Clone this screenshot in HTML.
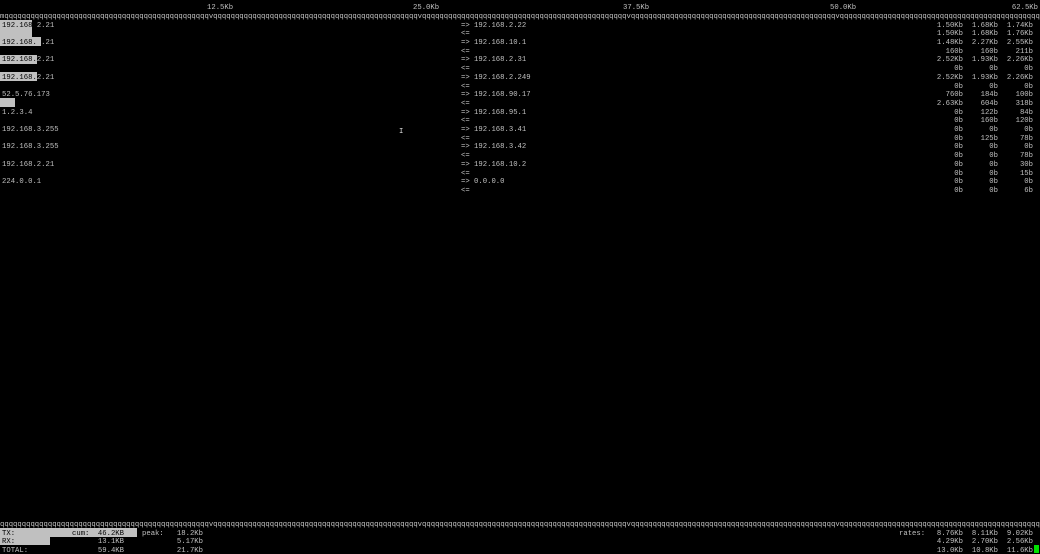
<!DOCTYPE html>
<html><head><meta charset="utf-8"><style>
html,body{margin:0;padding:0;background:#000;width:1040px;height:554px;overflow:hidden}
body{position:relative;font-family:"Liberation Mono",monospace;font-size:7.25px;color:#c0c0c0}
.t{position:absolute;white-space:pre;line-height:8.7px;height:8.7px;margin-top:2px}
.r{text-align:right}
.bar{position:absolute;background:#c0c0c0;left:0}
.inv{color:#000}
</style></head><body>
<div class="t" style="left:207px;top:2px">12.5Kb</div>
<div class="t" style="left:413px;top:2px">25.0Kb</div>
<div class="t" style="left:623px;top:2px">37.5Kb</div>
<div class="t" style="left:830px;top:2px">50.0Kb</div>
<div class="t r" style="right:2px;top:2px">62.5Kb</div>
<div class="t" id="q1" style="left:0;top:11px"></div>

<div class="bar" style="top:20px;height:17px;width:32px"></div>
<div class="bar" style="top:37px;height:9px;width:41px"></div>
<div class="bar" style="top:55px;height:8.7px;width:37px"></div>
<div class="bar" style="top:72px;height:8.7px;width:37px"></div>
<div class="bar" style="top:98px;height:9px;width:15px"></div>

<div id="rows"></div>

<div class="t" id="q2" style="left:0;top:519px"></div>
<div class="bar" style="top:528px;height:9px;width:137px"></div>
<div class="bar" style="top:537px;height:8px;width:50px"></div>
<div class="t inv" style="left:2px;top:528px">TX:</div>
<div class="t inv" style="left:72px;top:528px">cum:</div>
<div class="t r inv" style="right:916px;top:528px">46.2KB</div>
<div class="t" style="left:142px;top:528px">peak:</div>
<div class="t r" style="right:837px;top:528px">18.2Kb</div>
<div class="t inv" style="left:2px;top:536px">RX:</div>
<div class="t r" style="right:916px;top:536px">13.1KB</div>
<div class="t r" style="right:837px;top:536px">5.17Kb</div>
<div class="t" style="left:2px;top:545px">TOTAL:</div>
<div class="t r" style="right:916px;top:545px">59.4KB</div>
<div class="t r" style="right:837px;top:545px">21.7Kb</div>
<div class="t" style="left:899px;top:528px">rates:</div>
<div class="t r" style="right:77px;top:528px">8.76Kb</div>
<div class="t r" style="right:42px;top:528px">8.11Kb</div>
<div class="t r" style="right:7px;top:528px">9.02Kb</div>
<div class="t r" style="right:77px;top:536px">4.29Kb</div>
<div class="t r" style="right:42px;top:536px">2.70Kb</div>
<div class="t r" style="right:7px;top:536px">2.56Kb</div>
<div class="t r" style="right:77px;top:545px">13.0Kb</div>
<div class="t r" style="right:42px;top:545px">10.8Kb</div>
<div class="t r" style="right:7px;top:545px">11.6Kb</div>
<div style="position:absolute;left:1034px;top:545px;width:5px;height:8px;background:#00e000"></div>
<div class="t" style="left:399px;top:126px;color:#ddd">I</div>

<script>
function ql(first){var s=first;for(var i=1;i<240;i++){s+=(i%48==0)?'v':'q';}return s;}
document.getElementById('q1').textContent=ql('m');
document.getElementById('q2').textContent=ql('q');
var L=[['192.168.','2.21'],['192.168.','2.21'],['192.168.','2.21'],['192.168.','2.21'],['','52.5.76.173'],['','1.2.3.4'],['','192.168.3.255'],['','192.168.3.255'],['','192.168.2.21'],['','224.0.0.1']];
var M=['192.168.2.22','192.168.10.1','192.168.2.31','192.168.2.249','192.168.90.17','192.168.95.1','192.168.3.41','192.168.3.42','192.168.10.2','0.0.0.0'];
var R=[['1.50Kb','1.68Kb','1.74Kb'],['1.50Kb','1.68Kb','1.76Kb'],['1.48Kb','2.27Kb','2.55Kb'],['160b','160b','211b'],['2.52Kb','1.93Kb','2.26Kb'],['0b','0b','0b'],['2.52Kb','1.93Kb','2.26Kb'],['0b','0b','0b'],['760b','184b','100b'],['2.63Kb','604b','318b'],['0b','122b','84b'],['0b','160b','120b'],['0b','0b','0b'],['0b','125b','78b'],['0b','0b','0b'],['0b','0b','78b'],['0b','0b','30b'],['0b','0b','15b'],['0b','0b','0b'],['0b','0b','6b']];
var h='';
function rowTop(r){return (24+(r-2)*8.7-4.35).toFixed(1);}
for(var i=0;i<10;i++){
 var r=2+i*2;
 var a=L[i];
 h+='<div class="t" style="left:2px;top:'+rowTop(r)+'px"><span class="inv">'+a[0]+'</span>'+a[1]+'</div>';
 h+='<div class="t" style="left:461px;top:'+rowTop(r)+'px">=&gt; '+M[i]+'</div>';
 h+='<div class="t" style="left:461px;top:'+rowTop(r+1)+'px">&lt;=</div>';
}
for(var j=0;j<20;j++){
 var t=rowTop(2+j);
 h+='<div class="t r" style="right:77px;top:'+t+'px">'+R[j][0]+'</div>';
 h+='<div class="t r" style="right:42px;top:'+t+'px">'+R[j][1]+'</div>';
 h+='<div class="t r" style="right:7px;top:'+t+'px">'+R[j][2]+'</div>';
}
document.getElementById('rows').innerHTML=h;
</script>
</body></html>
